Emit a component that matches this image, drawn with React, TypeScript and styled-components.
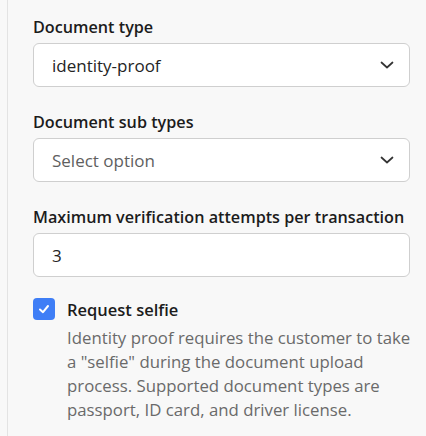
import React from "react";
import styled, { createGlobalStyle } from "styled-components";

const Global = createGlobalStyle`
  html, body { margin: 0; padding: 0; background: #f8f8f8; }
  body { font-family: "Open Sans", "Noto Sans", sans-serif; }
`;

const Panel = styled.div`
  margin-left: 7px;
  border-left: 1px solid #e3e3e3;
  padding: 15px 15px 0 25px;
  width: 377px;
  height: 436px;
  box-sizing: content-box;
  display: flex;
  flex-direction: column;
  gap: 23px;
`;

const Field = styled.div`
  display: flex;
  flex-direction: column;
  gap: 4px;
`;

const Label = styled.label`
  font-size: 16.2px;
  line-height: 24px;
  font-weight: 600;
  color: #1c1c1c;
`;

const Box = styled.div`
  height: 44px;
  box-sizing: border-box;
  border: 1px solid #cfcfcf;
  border-radius: 6px;
  background: #fff;
  display: flex;
  align-items: center;
  justify-content: space-between;
  padding: 0 14px 0 18px;
`;

const Value = styled.span<{ $muted?: boolean }>`
  font-size: 17px;
  color: ${(p) => (p.$muted ? "#5f5f5f" : "#242424")};
`;

const CheckRow = styled.div`
  display: flex;
  gap: 12px;
  align-items: flex-start;
  margin-top: -2px;
`;

const Check = styled.span`
  width: 22px;
  height: 22px;
  border-radius: 4px;
  background: #3f7ef6;
  display: flex;
  align-items: center;
  justify-content: center;
  flex: none;
`;

const CheckText = styled.div`
  display: flex;
  flex-direction: column;
  gap: 4px;
  flex: none;
  width: 344px;
`;

const CheckTitle = styled.div`
  font-size: 16.5px;
  line-height: 24px;
  font-weight: 600;
  color: #1c1c1c;
`;

const Desc = styled.div`
  font-size: 16.8px;
  line-height: 24px;
  color: #6a6a6a;
`;

const Chevron = () => (
  <svg width="16" height="16" viewBox="0 0 16 16">
    <polyline points="2.5,5.5 8,10.5 13.5,5.5" fill="none" stroke="#333" strokeWidth="1.7" strokeLinecap="round" strokeLinejoin="round" />
  </svg>
);

export default function App() {
  return (
    <>
      <Global />
      <Panel>
        <Field>
          <Label>Document type</Label>
          <Box>
            <Value>identity-proof</Value>
            <Chevron />
          </Box>
        </Field>
        <Field>
          <Label>Document sub types</Label>
          <Box>
            <Value $muted>Select option</Value>
            <Chevron />
          </Box>
        </Field>
        <Field>
          <Label>Maximum verification attempts per transaction</Label>
          <Box>
            <Value>3</Value>
          </Box>
        </Field>
        <CheckRow>
          <Check>
            <svg width="14" height="14" viewBox="0 0 14 14">
              <polyline points="3,7.5 6,10.2 11,4" fill="none" stroke="#fff" strokeWidth="2" strokeLinecap="round" strokeLinejoin="round" />
            </svg>
          </Check>
          <CheckText>
            <CheckTitle>Request selfie</CheckTitle>
            <Desc>
              Identity proof requires the customer to take a "selfie" during the document upload
              process. Supported document types are passport, ID card, and driver license.
            </Desc>
          </CheckText>
        </CheckRow>
      </Panel>
    </>
  );
}
